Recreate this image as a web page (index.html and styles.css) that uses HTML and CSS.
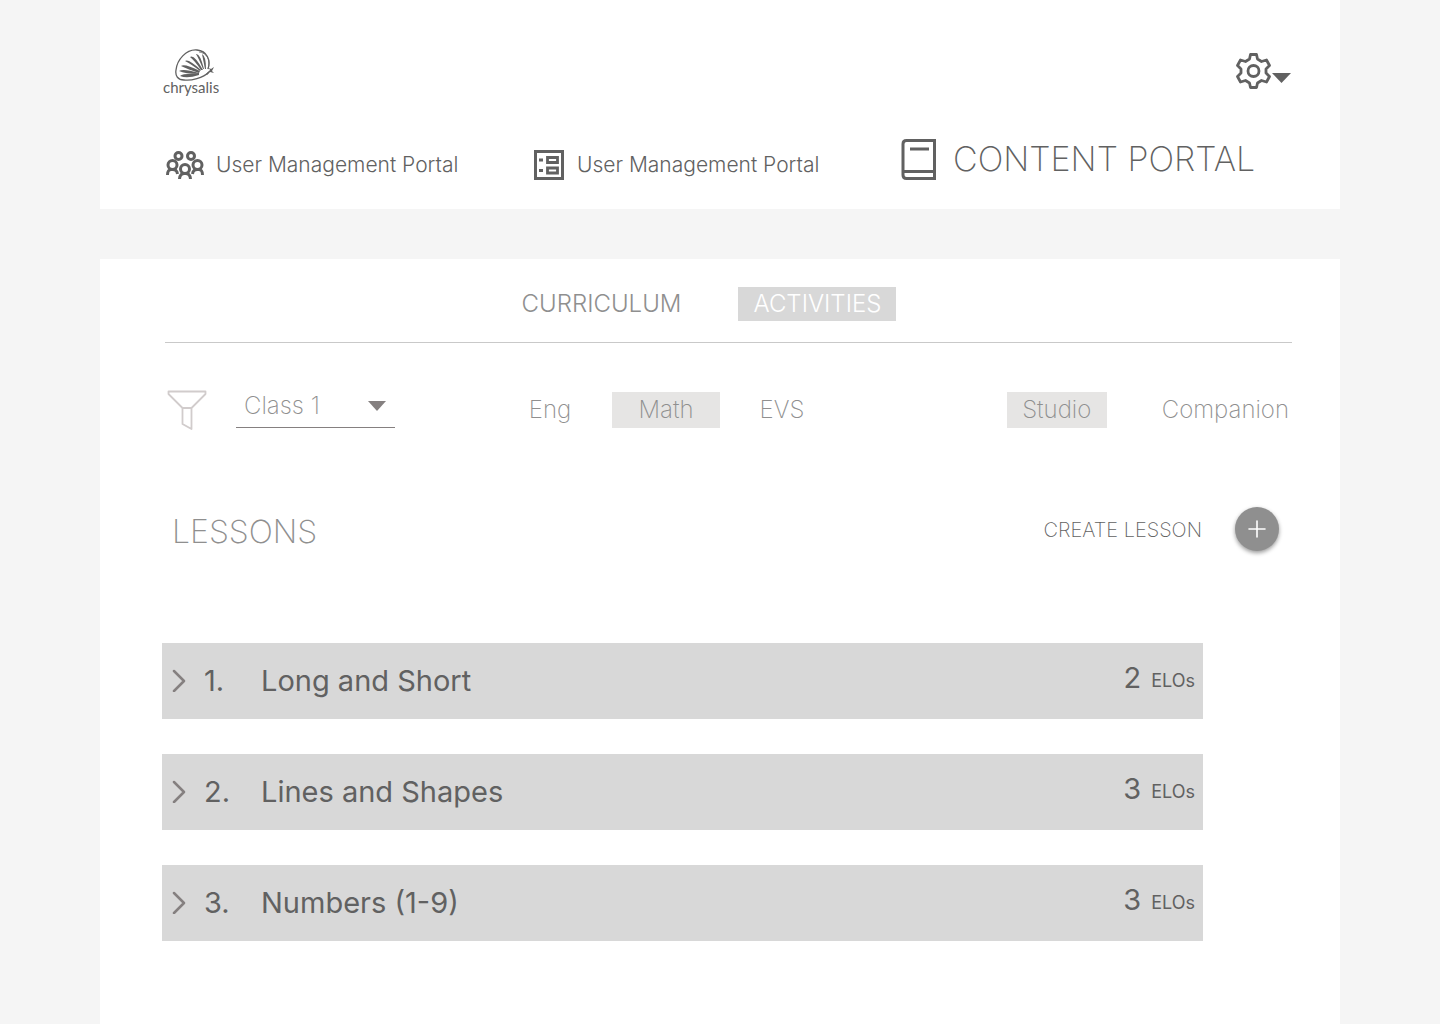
FILE: index.html
```html
<!DOCTYPE html>
<html lang="en">
<head>
<meta charset="utf-8">
<meta name="viewport" content="width=device-width, initial-scale=1">
<title>Chrysalis – Content Portal</title>
<link rel="stylesheet" href="styles.css">
</head>
<body>
<header class="header">
  <div class="topbar">
    <a class="logo" href="#">
      <svg class="logo-mark" width="42" height="32" viewBox="0 0 42 32" aria-hidden="true">
        <path d="M34 20C37 11 33 2 23 1C12 0 3 11 2 21C1 27 4 31 10 31C17 32 29 29 35 23" fill="none" stroke="#616161" stroke-width="1.3"/>
        <path d="M34 20C37 11 33 4 25 3" fill="none" stroke="#616161" stroke-width=".7"/>
        <g fill="#616161">
          <path d="M29 20Q25 10 22 5Q26 4 30 20z"/>
          <path d="M27 21Q21 12 16 8Q20 5 29 21z"/>
          <path d="M26 22Q17 15 11 12Q14 9 27 21z"/>
          <path d="M25 24Q13 20 7 17Q10 14 26 22z"/>
          <path d="M25 25Q11 25 5 22Q9 19 25 24z"/>
          <path d="M25 26Q13 30 6 27Q9 24 25 25z"/>
          <path d="M31 20Q29 10 28 5Q32 7 32 20z"/>
          <path d="M32 25L36 21L35 19L37 20L40 18L38 22L40 24L36 23L33 26z"/>
        </g>
      </svg>
      <span class="logo-name">chrysalis</span>
    </a>
    <button class="settings" type="button" aria-label="Settings">
      <svg width="56" height="38" viewBox="0 0 56 38" aria-hidden="true">
        <path d="M14.500 2.500H20.500L21.500 7L25.500 9.500L30.500 8L33.500 13.500L30 17V21L33.500 24.500L30.500 30L25.500 28.500L21.500 31L20.500 35.500H14.500L13.500 31L9.500 28.500L4.500 30L1.500 24.500L5 21V17L1.500 13.500L4.500 8L9.500 9.500L13.500 7z" fill="none" stroke="#616161" stroke-width="2.800" stroke-linejoin="round"/>
        <circle cx="17.500" cy="19" r="5.500" fill="none" stroke="#616161" stroke-width="2.800"/>
        <path d="M36 21H55L45.500 31z" fill="#616161"/>
      </svg>
    </button>
  </div>
  <nav class="portals">
    <a class="portal" href="#">
      <svg width="38" height="28" viewBox="0 0 38 28" fill="none" stroke="#616161" stroke-width="3" aria-hidden="true">
        <circle cx="12.500" cy="5" r="3.500"/><circle cx="25" cy="5" r="3.500"/>
        <circle cx="6.500" cy="14" r="4.500"/><circle cx="31.500" cy="14" r="4.500"/><circle cx="19" cy="18" r="4.500"/>
        <path d="M1.500 24Q1.500 18 6 18.500Q11 18 11.500 23M36.500 24Q36.500 18 32 18.500Q27 18 26.500 23M13.500 28Q14 22 19 22.500Q24 22 24.500 28"/>
      </svg>
      <span>User Management Portal</span>
    </a>
    <a class="portal" href="#">
      <svg width="32" height="30" viewBox="0 0 32 30" fill="none" stroke="#616161" aria-hidden="true">
        <path d="M2.500 1.500H29.500V28.500H2.500z" stroke-width="3"/>
        <path d="M14.500 7.500H24.500V12.500H14.500zM14.500 18H24.500V23H14.500z" stroke-width="2.800"/>
        <path d="M6 10H10M6 20.500H10" stroke-width="2.800"/>
      </svg>
      <span>User Management Portal</span>
    </a>
    <a class="portal portal-current" href="#" aria-current="page">
      <svg width="36" height="42" viewBox="0 0 36 42" fill="none" stroke="#616161" stroke-width="3" aria-hidden="true">
        <path d="M34.500 2.500V40.500H6.500Q3 40.500 3 37V6Q3 2.500 6.500 2.500zM3 33.500H34.500M10 11H29"/>
      </svg>
      <span>CONTENT PORTAL</span>
    </a>
  </nav>
</header>

<main class="content">
  <div class="tabs">
    <button class="tab" type="button">CURRICULUM</button>
    <button class="tab tab-active" type="button">ACTIVITIES</button>
  </div>

  <div class="filters">
    <svg class="funnel" width="41" height="42" viewBox="0 0 41 42" fill="none" stroke="#d1cccc" stroke-width="1.800" stroke-linejoin="round" aria-hidden="true">
      <path d="M2.500 2.500H39.500V5L25.500 19V40L16.500 35V19L2.500 5zM16.500 19H25.500"/>
    </svg>
    <div class="class-picker">
      <select class="class-select" aria-label="Class">
        <option>Class 1</option>
        <option>Class 2</option>
        <option>Class 3</option>
      </select>
      <svg class="class-arrow" width="18" height="10" viewBox="0 0 18 10" aria-hidden="true"><path d="M0 0H18L9 10z" fill="#858080"/></svg>
    </div>
    <div class="subjects">
      <button class="chip" type="button">Eng</button>
      <button class="chip chip-active" type="button">Math</button>
      <button class="chip" type="button">EVS</button>
    </div>
    <div class="modes">
      <button class="chip mode-studio chip-active" type="button">Studio</button>
      <button class="chip" type="button">Companion</button>
    </div>
  </div>

  <div class="lessons-head">
    <h1 class="lessons-title">LESSONS</h1>
    <label class="create-label" for="create">CREATE LESSON</label>
    <button class="create" id="create" type="button">
      <svg width="18" height="18" viewBox="0 0 18 18" aria-hidden="true"><path d="M9 1V17M1 9H17" stroke="#fff" stroke-width="1.600" stroke-linecap="round"/></svg>
    </button>
  </div>

  <ul class="lessons">
    <li><button class="lesson" type="button">
      <svg width="14" height="24" viewBox="0 0 14 24" aria-hidden="true"><path d="M2 3L12 13L2 23" fill="none" stroke="#858080" stroke-width="2.500" stroke-linecap="round" stroke-linejoin="round"/></svg>
      <span class="lesson-number">1.</span><span class="lesson-name">Long and Short</span>
      <span class="lesson-count">2</span><span class="lesson-unit">ELOs</span>
    </button></li>
    <li><button class="lesson" type="button">
      <svg width="14" height="24" viewBox="0 0 14 24" aria-hidden="true"><path d="M2 3L12 13L2 23" fill="none" stroke="#858080" stroke-width="2.500" stroke-linecap="round" stroke-linejoin="round"/></svg>
      <span class="lesson-number">2.</span><span class="lesson-name">Lines and Shapes</span>
      <span class="lesson-count">3</span><span class="lesson-unit">ELOs</span>
    </button></li>
    <li><button class="lesson" type="button">
      <svg width="14" height="24" viewBox="0 0 14 24" aria-hidden="true"><path d="M2 3L12 13L2 23" fill="none" stroke="#858080" stroke-width="2.500" stroke-linecap="round" stroke-linejoin="round"/></svg>
      <span class="lesson-number">3.</span><span class="lesson-name">Numbers (1-9)</span>
      <span class="lesson-count">3</span><span class="lesson-unit">ELOs</span>
    </button></li>
  </ul>
</main>
</body>
</html>
```
FILE: styles.css
```css
* {
  box-sizing: border-box;
}

body {
  margin: 0;
  min-height: 100vh;
  padding: 0 100px;
  display: flex;
  flex-direction: column;
  gap: 50px;
  background: #f5f5f5;
  color: #616161;
  font-family: Inter, "Work Sans", sans-serif;
  font-weight: 300;
}

button,
select {
  margin: 0;
  padding: 0;
  border: 0;
  border-radius: 0;
  background: none;
  color: inherit;
  font: inherit;
  cursor: pointer;
}

a {
  color: inherit;
  text-decoration: none;
}

svg {
  display: block;
  flex: none;
}

.header {
  padding: 49px 48px 28px 63px;
  background: #fff;
}

.topbar {
  display: flex;
  align-items: center;
  justify-content: space-between;
}

.logo {
  display: flex;
  flex-direction: column;
  align-items: center;
}

.logo-mark {
  margin-left: 8px;
}

.logo-name {
  font-family: Lato, sans-serif;
  font-size: 15px;
  font-weight: 400;
  line-height: 12px;
}

.portals {
  display: grid;
  grid-template-columns: repeat(3, 1fr);
  align-items: end;
  margin-top: 44px;
  padding: 0 25px 0 3px;
}

.portal {
  display: flex;
  align-items: center;
  gap: 12px;
  font-size: 21px;
  line-height: 32px;
  white-space: nowrap;
}

.portal-current {
  gap: 17px;
  font-size: 34px;
  font-weight: 200;
  line-height: 44px;
}

.content {
  flex: 1;
  padding: 28px 48px 83px 62px;
  background: #fff;
}

.tabs {
  display: flex;
  justify-content: center;
  gap: 42px;
  margin-left: 3px;
  padding: 0 54px 21px 0;
  border-bottom: 1px solid #c9c9c9;
  color: #8f8f8f;
  font-size: 24px;
  line-height: 34px;
}

.tab {
  padding: 0 15px;
}

.tab-active {
  background: #d8d8d8;
  color: #fff;
}

.filters {
  display: flex;
  align-items: flex-start;
  margin-top: 42px;
  padding: 0 3px 0 4px;
  color: #8f8f8f;
  font-size: 24px;
  font-weight: 200;
  line-height: 36px;
}

.funnel {
  margin-top: 4px;
}

.class-picker {
  display: grid;
  align-items: center;
  width: 159px;
  margin-left: 29px;
  border-bottom: 1px solid #858080;
}

.class-select,
.class-arrow {
  grid-area: 1 / 1;
}

.class-select {
  appearance: none;
  height: 42px;
  padding-left: 8px;
}

.class-arrow {
  justify-self: end;
  margin-right: 9px;
  pointer-events: none;
}

.subjects {
  display: grid;
  grid-template-columns: repeat(3, 108px);
  gap: 8px;
  margin: 7px 0 0 101px;
}

.modes {
  display: flex;
  gap: 55px;
  margin: 7px 0 0 auto;
}

.chip-active {
  background: #e6e5e4;
}

.mode-studio {
  width: 100px;
}

.lessons-head {
  display: flex;
  align-items: center;
  margin-top: 73px;
  padding: 0 13px 0 10px;
}

.lessons-title {
  margin: 0 auto 0 0;
  padding-top: 6px;
  color: #8f8f8f;
  font-size: 32px;
  font-weight: 200;
  line-height: 44px;
}

.create-label {
  padding-top: 2px;
  font-size: 20px;
  font-weight: 200;
}

.create {
  display: grid;
  place-items: center;
  width: 44px;
  height: 44px;
  margin-left: 33px;
  border-radius: 50%;
  background: #8f8f8f;
  box-shadow: 0 2px 4px rgba(0, 0, 0, 0.4);
}

.lessons {
  display: grid;
  gap: 35px;
  margin: 89px 89px 0 0;
  padding: 0;
  list-style: none;
}

.lesson {
  display: flex;
  align-items: center;
  width: 100%;
  height: 76px;
  padding: 0 8px 2px 10px;
  background: #d8d8d8;
  font-size: 29px;
  font-weight: 400;
  text-align: left;
}

.lesson-number {
  width: 57px;
  margin-left: 18px;
}

.lesson-count {
  margin-left: auto;
  padding-bottom: 6px;
}

.lesson-unit {
  margin-left: 10px;
  font-size: 18px;
}
```
